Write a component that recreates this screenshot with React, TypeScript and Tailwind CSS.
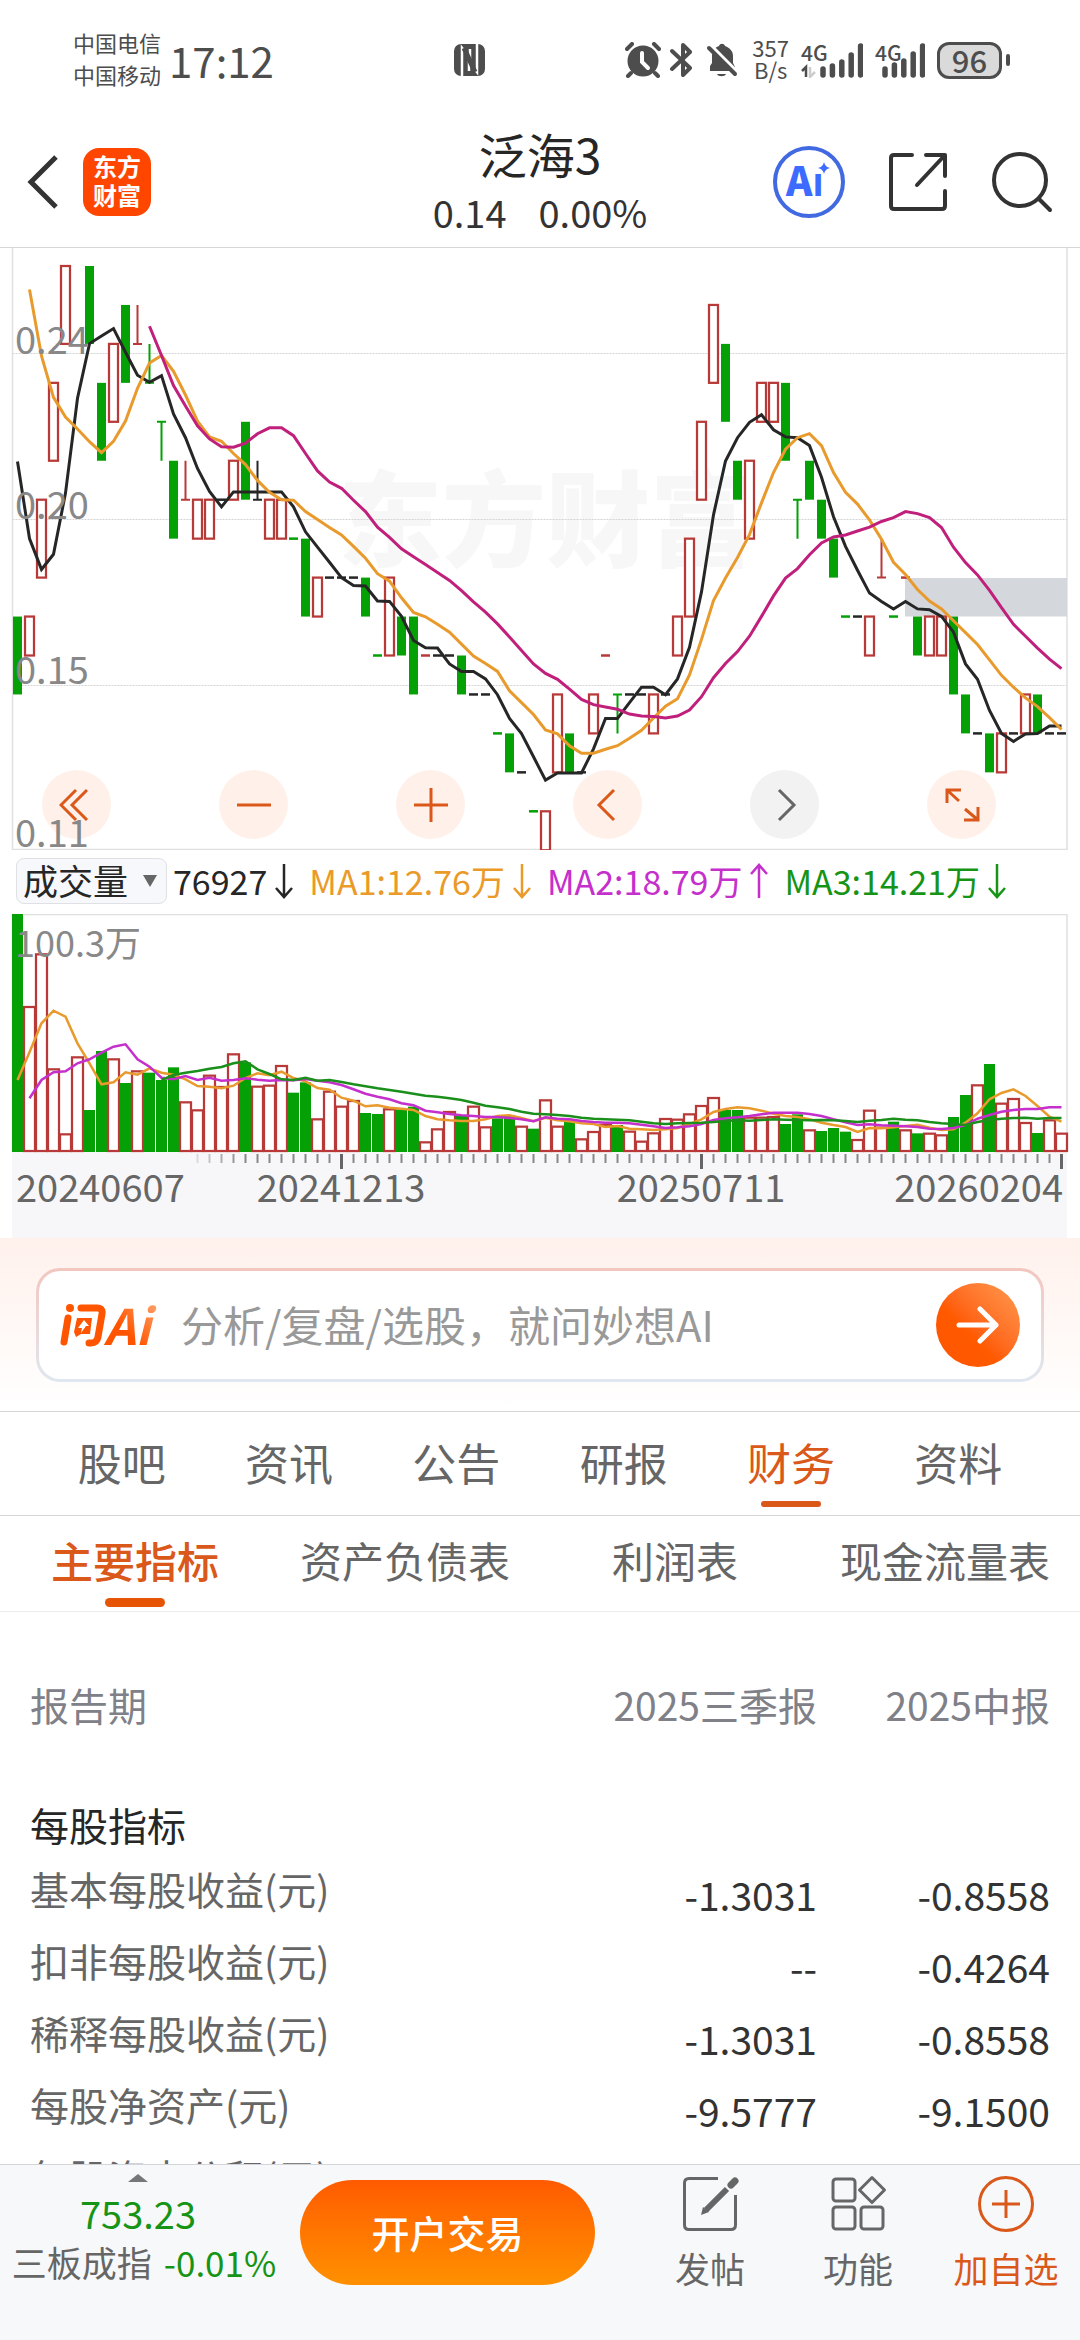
import { useState } from 'react';
import type { ReactNode } from 'react';

type CandleKind = 'up' | 'down' | 'flat';
type Shape = 'body' | 'dash' | 'baseTop' | 'baseBottom';
type Candle = [index: number, kind: CandleKind, shape: Shape, high: number, low: number];

const COLORS = { up: '#b83a38', down: '#05a005', flat: '#262626' };
const FIRST_X = 17.5;
const STEP = 12;

const xAt = (i: number) => FIRST_X + i * STEP;
const levelY = (level: number) => 18 + level * 38.95;
const priceY = (v: number) => v * 0.3954 - 8;
const volumeY = (v: number) => v / 3 - 64;

const candles: Candle[] = [
  [0, 'down', 'body', 9, 11], [1, 'up', 'body', 9, 10], [2, 'up', 'body', 6, 8], [3, 'up', 'body', 3, 5],
  [4, 'up', 'body', 0, 2], [6, 'down', 'body', 0, 2], [7, 'down', 'body', 3, 5], [8, 'up', 'body', 2, 4],
  [9, 'down', 'body', 1, 3], [10, 'up', 'baseBottom', 1, 2], [11, 'down', 'baseBottom', 2, 3],
  [12, 'down', 'baseTop', 4, 5], [13, 'down', 'body', 5, 7], [14, 'up', 'baseBottom', 5, 6],
  [15, 'up', 'body', 6, 7], [16, 'up', 'body', 6, 7], [17, 'flat', 'dash', 6, 6], [18, 'up', 'body', 5, 6],
  [19, 'down', 'body', 4, 6], [20, 'flat', 'baseBottom', 5, 6], [21, 'up', 'body', 6, 7], [22, 'up', 'body', 6, 7],
  [23, 'down', 'dash', 7, 7], [24, 'down', 'body', 7, 9], [25, 'up', 'body', 8, 9], [26, 'flat', 'dash', 8, 8],
  [27, 'flat', 'dash', 8, 8], [28, 'flat', 'dash', 8, 8], [29, 'down', 'body', 8, 9], [30, 'down', 'dash', 10, 10],
  [31, 'up', 'body', 8, 10], [32, 'down', 'body', 9, 10], [33, 'down', 'body', 9, 11], [34, 'up', 'dash', 10, 10],
  [35, 'flat', 'dash', 10, 10], [36, 'flat', 'dash', 10, 10], [37, 'down', 'body', 10, 11], [38, 'flat', 'dash', 11, 11],
  [39, 'flat', 'dash', 11, 11], [40, 'down', 'dash', 12, 12], [41, 'down', 'body', 12, 13], [42, 'flat', 'dash', 13, 13],
  [43, 'down', 'dash', 14, 14], [44, 'up', 'body', 14, 15], [45, 'up', 'body', 11, 13], [46, 'down', 'body', 12, 13],
  [47, 'flat', 'dash', 13, 13], [48, 'up', 'body', 11, 12], [49, 'up', 'dash', 10, 10], [50, 'down', 'baseTop', 11, 12],
  [51, 'flat', 'dash', 11, 11], [52, 'flat', 'dash', 11, 11], [53, 'up', 'body', 11, 12], [54, 'flat', 'dash', 11, 11],
  [55, 'up', 'body', 9, 10], [56, 'up', 'body', 7, 9], [57, 'up', 'body', 4, 6], [58, 'up', 'body', 1, 3],
  [59, 'down', 'body', 2, 4], [60, 'down', 'body', 5, 6], [61, 'up', 'body', 5, 7], [62, 'up', 'body', 3, 4],
  [63, 'up', 'body', 3, 4], [64, 'down', 'body', 3, 5], [65, 'down', 'baseTop', 6, 7], [66, 'down', 'body', 5, 6],
  [67, 'down', 'body', 6, 7], [68, 'down', 'body', 7, 8], [69, 'down', 'dash', 9, 9], [70, 'flat', 'dash', 9, 9],
  [71, 'up', 'body', 9, 10], [72, 'up', 'baseBottom', 7, 8], [73, 'down', 'dash', 9, 9], [74, 'up', 'dash', 8, 8],
  [75, 'down', 'body', 9, 10], [76, 'up', 'body', 9, 10], [77, 'up', 'body', 9, 10], [78, 'down', 'body', 9, 11],
  [79, 'down', 'body', 11, 12], [80, 'flat', 'dash', 12, 12], [81, 'down', 'body', 12, 13], [82, 'up', 'body', 12, 13],
  [83, 'flat', 'dash', 12, 12], [84, 'up', 'body', 11, 12], [85, 'down', 'body', 11, 12], [86, 'flat', 'dash', 12, 12],
  [87, 'flat', 'dash', 12, 12],
];

const priceLines = [
  {
    color: '#262626',
    start: 0,
    values: [
      560, 755, 833, 795, 640, 400, 262, 243, 224, 284, 342, 360, 343, 440, 500, 578, 636, 675, 637, 637, 637, 637, 637, 675,
      738, 777, 815, 854, 874, 875, 913, 914, 952, 1013, 1031, 1032, 1072, 1091, 1091, 1110, 1150, 1210, 1248, 1307, 1366,
      1348, 1348, 1348, 1287, 1210, 1210, 1170, 1131, 1131, 1150, 1110, 1030, 890, 695, 559, 500, 461, 442, 480, 498, 500,
      520, 600, 700, 775, 835, 893, 914, 933, 914, 933, 935, 952, 992, 1072, 1111, 1190, 1248, 1268, 1249, 1248, 1229, 1229,
    ],
  },
  {
    color: '#e99a2c',
    start: 1,
    values: [
      125, 293, 398, 448, 478, 510, 538, 509, 458, 375, 311, 292, 332, 392, 458, 498, 509, 540, 568, 608, 638, 657, 658, 687,
      707, 727, 746, 775, 805, 844, 863, 905, 942, 953, 972, 992, 1022, 1052, 1071, 1091, 1140, 1170, 1200, 1239, 1249, 1279,
      1298, 1298, 1288, 1279, 1260, 1240, 1209, 1179, 1160, 1100, 1010, 912, 855, 803, 745, 665, 588, 529, 500, 490, 520,
      588, 638, 668, 708, 757, 815, 846, 884, 913, 933, 963, 993, 1023, 1062, 1101, 1131, 1158, 1180, 1208, 1238,
    ],
  },
  {
    color: '#c0207c',
    start: 11,
    values: [
      218, 292, 368, 420, 470, 503, 523, 524, 514, 490, 475, 475, 495, 540, 584, 612, 628, 658, 687, 726, 752, 781, 801, 821,
      841, 861, 887, 915, 941, 971, 1004, 1038, 1072, 1096, 1111, 1136, 1162, 1175, 1181, 1187, 1199, 1204, 1205, 1209, 1204,
      1189, 1155, 1107, 1071, 1041, 1002, 952, 900, 855, 831, 796, 766, 751, 746, 736, 726, 712, 702, 687, 692, 702, 727,
      777, 816, 847, 886, 930, 972, 1002, 1032, 1060, 1084,
    ],
  },
];

const volumeTops = [
  192, 468, 310, 655, 850, 619, 780, 603, 625, 699, 661, 668, 690, 652, 754, 778, 674, 708, 610, 637, 707, 704, 645, 728,
  697, 805, 722, 767, 750, 789, 792, 775, 778, 770, 874, 835, 783, 795, 767, 829, 805, 795, 827, 836, 748, 827, 815, 865,
  843, 822, 825, 842, 872, 847, 804, 806, 790, 765, 741, 780, 780, 800, 800, 798, 822, 793, 838, 843, 834, 845, 867, 779,
  830, 815, 838, 850, 848, 853, 801, 735, 703, 642, 758, 744, 816, 849, 808, 848,
];

const fallingVolumes = [
  0, 6, 7, 9, 11, 12, 13, 19, 23, 24, 29, 30, 32, 33, 37, 40, 41, 43, 46, 50, 59, 60, 64, 65, 67, 68, 69, 73, 75, 78, 79, 81, 85,
];

const volumeLines = [
  {
    color: '#e99a2c',
    start: 0,
    values: [
      690, 607, 520, 482, 500, 580, 640, 703, 697, 667, 674, 655, 668, 674, 688, 708, 710, 715, 707, 684, 670, 676, 665, 684,
      694, 714, 719, 743, 752, 769, 766, 773, 776, 780, 798, 808, 811, 813, 813, 808, 798, 796, 804, 814, 803, 811, 814, 820,
      822, 831, 828, 836, 838, 840, 838, 834, 822, 808, 786, 777, 772, 775, 782, 791, 798, 801, 808, 818, 825, 831, 846, 834,
      835, 832, 828, 824, 833, 840, 838, 818, 790, 748, 729, 718, 738, 768, 800, 815,
    ],
  },
  {
    color: '#c52fcb',
    start: 1,
    values: [
      745, 690, 667, 664, 640, 628, 608, 590, 583, 628, 650, 683, 688, 678, 690, 683, 692, 690, 685, 689, 692, 690, 691, 687,
      692, 697, 705, 718, 731, 740, 748, 760, 766, 782, 787, 792, 796, 798, 801, 801, 804, 808, 814, 802, 806, 808, 813, 816,
      818, 818, 820, 824, 829, 834, 832, 829, 822, 810, 805, 802, 798, 793, 788, 788, 788, 792, 798, 808, 817, 825, 823, 826,
      827, 829, 831, 836, 837, 834, 825, 806, 795, 785, 780, 777, 777, 772, 772,
    ],
  },
  {
    color: '#1b8f1b',
    start: 12,
    values: [
      690, 675, 668, 663, 656, 651, 640, 634, 658, 672, 688, 690, 683, 692, 690, 696, 703, 709, 715, 720, 725, 731, 737, 740,
      745, 750, 758, 767, 772, 777, 785, 791, 793, 795, 798, 803, 806, 808, 809, 811, 815, 820, 822, 820, 819, 818, 816, 813,
      811, 812, 810, 808, 809, 810, 811, 810, 811, 813, 816, 812, 810, 806, 809, 811, 816, 820, 822, 825, 816, 810, 806, 804,
      803, 806, 804, 804,
    ],
  },
];

const axisPrices = [
  { label: '0.24', y: 106 },
  { label: '0.20', y: 271 },
  { label: '0.15', y: 436 },
  { label: '0.11', y: 599 },
];

const tabs = ['股吧', '资讯', '公告', '研报', '财务', '资料'];
const reportTabs = ['主要指标', '资产负债表', '利润表', '现金流量表'];

const metrics = [
  { name: '基本每股收益(元)', q3: '-1.3031', half: '-0.8558' },
  { name: '扣非每股收益(元)', q3: '--', half: '-0.4264' },
  { name: '稀释每股收益(元)', q3: '-1.3031', half: '-0.8558' },
  { name: '每股净资产(元)', q3: '-9.5777', half: '-9.1500' },
  { name: '每股资本公积(元)', q3: '', half: '' },
];

function toPoints(values: number[], start: number, toY: (v: number) => number) {
  return values.map((v, i) => `${xAt(start + i)},${toY(v).toFixed(1)}`).join(' ');
}

function SignalBars({ tops }: { tops: number[] }) {
  return (
    <>
      {tops.map((top, i) => (
        <path key={top} d={`M${3 + i * 9.4} ${top + 3}V32`} stroke="#4d4d4d" strokeWidth="5.5" strokeLinecap="round" />
      ))}
    </>
  );
}

function StatusBar() {
  return (
    <div className="flex h-[120px] shrink-0 items-center text-[#4d4d4d]">
      <div className="flex w-[42%] items-center gap-2 pl-[73px]">
        <div className="pb-1 text-[22px] leading-8">
          <div>中国电信</div>
          <div>中国移动</div>
        </div>
        <span className="text-[42px] leading-[60px]">17:12</span>
      </div>
      <svg width="32" height="34" viewBox="0 0 32 34">
        <rect x="0" y="1" width="31" height="32" rx="7" fill="#4d4d4d" />
        <path d="M8 34V5L15 14V28" fill="none" stroke="#fff" strokeWidth="2.5" />
        <path d="M23 0V29L16 20V6" fill="none" stroke="#fff" strokeWidth="2.5" />
        <path d="M10 5L21 29" stroke="#4d4d4d" strokeWidth="5" />
      </svg>
      <div className="ml-auto flex items-center pr-[70px]">
        <svg width="37" height="36" viewBox="0 0 37 36" className="mr-2">
          <circle cx="18" cy="19" r="15.5" fill="#4d4d4d" />
          <path d="M2 7L7 2M34 7L29 2M6 31L3 34M30 31L33 34" stroke="#4d4d4d" strokeWidth="4" strokeLinecap="round" />
          <path d="M17 11V20L23 26" fill="none" stroke="#fff" strokeWidth="4" strokeLinecap="round" />
        </svg>
        <svg width="24" height="36" viewBox="0 0 24 36" className="mr-3">
          <path d="M2 9L20 26L13 33V3L20 10L2 27" fill="none" stroke="#4d4d4d" strokeWidth="4" strokeLinecap="round" strokeLinejoin="round" />
        </svg>
        <svg width="32" height="36" viewBox="0 0 32 36" className="mr-3.5">
          <path d="M4 29V24L6 21V13C7 7 10 5 13 4C14 1 18 1 19 4C24 6 27 9 27 14V21L29 25V29Z" fill="#4d4d4d" />
          <path d="M11 32H20C19 35 12 35 11 32Z" fill="#4d4d4d" />
          <path d="M4 3L31 30" stroke="#fff" strokeWidth="4" />
          <path d="M3 6L29 32" stroke="#4d4d4d" strokeWidth="4" strokeLinecap="round" />
        </svg>
        <div className="mr-3 pb-1 text-center text-[22px] leading-[22px]">
          <div>357</div>
          <div>B/s</div>
        </div>
        <div className="relative mr-3 h-[35px] w-[62px]">
          <span className="absolute top-0 left-0 text-[21px] leading-[18px] font-medium">4G</span>
          <svg className="absolute right-0 bottom-0" width="62" height="35" viewBox="-19 0 62 35">
            <path d="M-18 28L-14 24V34" fill="none" stroke="#4d4d4d" strokeWidth="2.5" />
            <path d="M-10 24V34L-5 29" fill="none" stroke="#ccc" strokeWidth="2.5" />
            <SignalBars tops={[23, 20, 16, 9, 0]} />
          </svg>
        </div>
        <div className="relative mr-3 h-[35px] w-[50px]">
          <span className="absolute top-0 left-0 text-[21px] leading-[18px] font-medium">4G</span>
          <svg className="absolute right-0 bottom-0" width="50" height="35" viewBox="-7 0 50 35">
            <SignalBars tops={[23, 19, 15, 8, 0]} />
          </svg>
        </div>
        <div className="flex h-[37px] w-[65px] items-center justify-center rounded-xl border-[3px] border-[#4d4d4d] bg-[#dadada] text-[31px] leading-8 font-medium">
          96
        </div>
        <div className="ml-1 h-3 w-1 rounded-full bg-[#4d4d4d]" />
      </div>
    </div>
  );
}

function Header() {
  return (
    <header className="grid h-32 shrink-0 grid-cols-[1fr_auto_1fr] items-center border-b border-[#d6d6d6] px-[27px] pb-1">
      <div className="flex items-center gap-6">
        <button aria-label="返回">
          <svg width="32" height="56" viewBox="0 0 32 56" fill="none" stroke="#333" strokeWidth="5">
            <path d="M29 3L4 28L29 53" />
          </svg>
        </button>
        <a href="#home" className="flex size-[68px] flex-col items-center justify-center rounded-2xl bg-[#ff4600] pb-1 text-[24px] leading-[29px] font-bold text-white">
          <span>东方</span>
          <span>财富</span>
        </a>
      </div>
      <div className="text-center">
        <h1 className="text-[48px] leading-[60px] text-[#262626]">泛海3</h1>
        <p className="flex justify-center gap-8 text-[38px] leading-[58px]">
          <span>0.14</span>
          <span>0.00%</span>
        </p>
      </div>
      <div className="flex items-center justify-end gap-[43px]">
        <button aria-label="AI">
          <svg width="72" height="74" viewBox="0 0 72 74">
            <circle cx="36" cy="37" r="34" fill="none" stroke="#4169e1" strokeWidth="4" />
            <text x="13" y="51" fontSize="40" fontWeight="900" fill="#3d6bff">
              Aı
            </text>
            <path d="M51 17Q52 22 57 23Q52 24 51 29Q50 24 45 23Q50 22 51 17Z" fill="#3d6bff" />
          </svg>
        </button>
        <button aria-label="分享">
          <svg width="60" height="60" viewBox="0 0 60 60" fill="none" stroke="#333" strokeWidth="4" strokeLinecap="round" strokeLinejoin="round">
            <path d="M24 3H6Q3 3 3 6V54Q3 57 6 57H54Q57 57 57 54V39" />
            <path d="M38 3H57V24M57 3L29 33" />
          </svg>
        </button>
        <button aria-label="搜索">
          <svg width="62" height="62" viewBox="0 0 62 62" fill="none" stroke="#333" strokeWidth="4" strokeLinecap="round">
            <circle cx="29" cy="29" r="26" />
            <path d="M48 48L59 59" />
          </svg>
        </button>
      </div>
    </header>
  );
}

function CandleMark({ candle }: { candle: Candle }) {
  const [index, kind, shape, high, low] = candle;
  const x = xAt(index);
  const top = levelY(high);
  const bottom = levelY(low);
  const color = COLORS[kind];

  if (shape === 'dash') return <path d={`M${x - 4.5} ${top}h9`} stroke={color} strokeWidth="2.5" />;
  if (shape === 'baseTop') return <path d={`M${x - 4.5} ${top}h9M${x} ${top}V${bottom}`} stroke={color} strokeWidth="2" />;
  if (shape === 'baseBottom') return <path d={`M${x - 4.5} ${bottom}h9M${x} ${top}V${bottom}`} stroke={color} strokeWidth="2" />;
  if (kind === 'down') return <rect x={x - 4.5} y={top} width="9" height={bottom - top} fill={color} />;
  return <rect x={x - 4.5} y={top} width="9" height={bottom - top} fill="#fff" stroke={color} strokeWidth="2.25" />;
}

function ChartButton({ label, muted, children }: { label: string; muted?: boolean; children: ReactNode }) {
  return (
    <button
      aria-label={label}
      className={`flex size-[69px] items-center justify-center rounded-full ${muted ? 'bg-[#f2f2f2] text-[#666]' : 'bg-[#fff1ea] text-[#d9581a]'}`}
    >
      <svg width="36" height="36" viewBox="0 0 36 36" fill="none" stroke="currentColor" strokeWidth="3">
        {children}
      </svg>
    </button>
  );
}

function PriceChart() {
  return (
    <section className="relative">
      <svg viewBox="0 0 1080 602" className="block h-auto w-full">
        <text x="338" y="311" fontSize="104" fontWeight="900" fill="#f7f7f7">
          东方财富
        </text>
        <path d="M12.5 105.5H1067M12.5 271.5H1067M12.5 437.5H1067" stroke="#d4d4d4" strokeDasharray="2 1" />
        <path d="M12.5 0V601.500H1067V0" fill="none" stroke="#e0e0e0" strokeWidth="1.5" />
        <rect x="905" y="330" width="162" height="38.5" fill="#d4d7dc" />
        {candles.map((candle) => (
          <CandleMark key={candle[0]} candle={candle} />
        ))}
        {priceLines.map((line) => (
          <polyline key={line.color} points={toPoints(line.values, line.start, priceY)} fill="none" stroke={line.color} strokeWidth="3" />
        ))}
      </svg>
      <div className="absolute right-[84px] bottom-[11px] left-[42px] flex justify-between">
        <ChartButton label="最早">
          <path d="M17 3L2 18L17 33M28 3L13 18L28 33" />
        </ChartButton>
        <ChartButton label="缩小">
          <path d="M1 18H35" />
        </ChartButton>
        <ChartButton label="放大">
          <path d="M1 18H35M18 1V35" />
        </ChartButton>
        <ChartButton label="向左">
          <path d="M24 3L9 18L24 33" />
        </ChartButton>
        <ChartButton label="向右" muted>
          <path d="M12 3L27 18L12 33" />
        </ChartButton>
        <ChartButton label="全屏">
          <path d="M3 16V3H17M3 3L15 14M34 20V33H20M34 33L21 22" />
        </ChartButton>
      </div>
      <svg viewBox="0 0 1080 602" className="pointer-events-none absolute inset-0 h-auto w-full">
        {axisPrices.map((price) => (
          <text key={price.label} x="15" y={price.y} fontSize="38" fill="#888">
            {price.label}
          </text>
        ))}
      </svg>
    </section>
  );
}

function Average({ text, up, color }: { text: string; up?: boolean; color: string }) {
  return (
    <span className={`flex items-center gap-2 ${color}`}>
      {text}
      <svg width="18" height="36" viewBox="0 0 18 36" fill="none" stroke="currentColor" strokeWidth="2.5">
        {up ? <path d="M9 35V2M1 11L9 2L17 11" /> : <path d="M9 1V34M1 25L9 34L17 25" />}
      </svg>
    </span>
  );
}

function IndicatorRow() {
  return (
    <div className="flex h-16 items-center pb-0.5 pl-4 text-[34px] leading-10 whitespace-nowrap">
      <label className="relative mr-1.5 block">
        <select aria-label="指标" className="h-[46px] w-[151px] appearance-none rounded-lg border border-[#dfe1e5] bg-[#f7f8fb] pb-0.5 pl-1.5 text-[35px] leading-10 text-[#262626]">
          <option>成交量</option>
        </select>
        <svg width="14" height="12" viewBox="0 0 14 12" className="pointer-events-none absolute top-[17px] right-[10px]">
          <path d="M0 0H14L7 12Z" fill="#666" />
        </svg>
      </label>
      <div className="flex gap-4">
        <Average text="76927" color="text-[#262626]" />
        <Average text="MA1:12.76万" color="text-[#ea9a28]" />
        <Average text="MA2:18.79万" color="text-[#c52fcb]" up />
        <Average text="MA3:14.21万" color="text-[#169416]" />
      </div>
    </div>
  );
}

function VolumeChart() {
  return (
    <svg viewBox="0 0 1080 324" className="block h-auto w-full">
      <rect x="12" y="238" width="1055" height="86" fill="#f7f7fa" />
      <path d="M12.5 238V0.5H1067V238" fill="none" stroke="#e0e0e0" strokeWidth="1.5" />
      {volumeTops.map((top, i) => {
        const y = volumeY(top);
        if (fallingVolumes.includes(i)) {
          return <rect key={i} x={xAt(i) - 5.5} y={y} width="11" height={238 - y} fill={COLORS.down} />;
        }
        return <rect key={i} x={xAt(i) - 5.5} y={y + 1} width="11" height={236 - y} fill="#fff" stroke={COLORS.up} strokeWidth="2.25" />;
      })}
      <text x="15" y="43" fontSize="36" fill="#888">
        100.3万
      </text>
      {volumeLines.map((line) => (
        <polyline key={line.color} points={toPoints(line.values, line.start, volumeY)} fill="none" stroke={line.color} strokeWidth="2.5" />
      ))}
      {volumeTops.map((_, i) => {
        if (i < 15) return null;
        const major = i === 27 || i === 57 || i === 87;
        return (
          <path
            key={i}
            d={`M${xAt(i)} 240V${major ? 255 : 249}`}
            stroke={major ? '#666' : '#888'}
            strokeWidth={major ? 3 : 2}
            opacity={i < 19 ? 0.25 + (i - 15) * 0.2 : 1}
          />
        );
      })}
      <g fontSize="38" fill="#666">
        <text x="16" y="288">20240607</text>
        <text x="341" y="288" textAnchor="middle">20241213</text>
        <text x="701" y="288" textAnchor="middle">20250711</text>
        <text x="1063" y="288" textAnchor="end">20260204</text>
      </g>
    </svg>
  );
}

function AskAi() {
  return (
    <section className="h-[174px] border-b border-[#d6d6d6] bg-linear-to-b from-[#fff1ec] to-white px-9 pt-[30px]">
      <div className="rounded-3xl bg-linear-to-b from-[#f3c6bf] to-[#dfe7f1] p-[3px]">
        <form className="flex h-[108px] items-center rounded-[21px] bg-white pr-[21px] pl-5">
          <svg width="100" height="46" viewBox="0 0 100 46" className="mr-[22px] shrink-0">
            <defs>
              <linearGradient id="askAi" gradientUnits="userSpaceOnUse" x1="60" y1="46" x2="100" y2="10">
                <stop offset="0.3" stopColor="#ff5500" />
                <stop offset="1" stopColor="#ff9a60" />
              </linearGradient>
            </defs>
            <g fill="none" stroke="#ff5500" strokeWidth="7" strokeLinejoin="round" strokeLinecap="round">
              <path d="M9 16L5 40" />
              <path d="M22 6H38Q44 6 43 12L39 35Q38 41 32 41H30" />
            </g>
            <circle cx="11" cy="6" r="4" fill="#ff5500" />
            <path d="M18 16H33L31 32H22L17 35L15 30Z" fill="#ff5500" />
            <path d="M25 18L30 24H27L22 31L23 26H19Z" fill="#fff" />
            <text x="45" y="43" fontSize="49" fontWeight="700" fontStyle="italic" fill="url(#askAi)">
              Ai
            </text>
          </svg>
          <input
            aria-label="提问"
            placeholder="分析/复盘/选股，就问妙想AI"
            className="min-w-0 flex-1 pb-0.5 text-[42px] leading-[60px] outline-none placeholder:text-[#999]"
          />
          <button type="button" aria-label="发送" className="flex size-[84px] items-center justify-center rounded-full bg-linear-to-bl from-[#ff9a4d] via-[#ff5a00] via-60% to-[#ff5500]">
            <svg width="44" height="38" viewBox="0 0 44 38" fill="none" stroke="#fff" strokeWidth="5" strokeLinecap="round" strokeLinejoin="round">
              <path d="M3 19H40M24 3L40 19L24 35" />
            </svg>
          </button>
        </form>
      </div>
    </section>
  );
}

function Tabs() {
  const [tab, setTab] = useState('财务');
  const [report, setReport] = useState('主要指标');

  return (
    <>
      <nav className="flex h-[104px] border-b border-[#d6d6d6] px-[38px]">
        {tabs.map((name) => (
          <button
            key={name}
            onClick={() => setTab(name)}
            className={`relative flex-1 pb-1 text-[44px] leading-[60px] ${name === tab ? 'text-[#d9581a]' : 'text-[#666]'}`}
          >
            {name}
            {name === tab && <span className="absolute bottom-2 left-1/2 h-1.5 w-[60px] -translate-x-1/2 rounded-full bg-[#d9581a]" />}
          </button>
        ))}
      </nav>
      <nav className="flex h-24 border-b border-[#ececec]">
        {reportTabs.map((name) => (
          <button
            key={name}
            onClick={() => setReport(name)}
            className={`relative flex-1 pb-2 text-[42px] leading-[60px] ${name === report ? 'font-medium text-[#d9581a]' : 'text-[#666]'}`}
          >
            {name}
            {name === report && <span className="absolute bottom-1 left-1/2 h-[9px] w-[60px] -translate-x-1/2 rounded-full bg-[#e65505]" />}
          </button>
        ))}
      </nav>
    </>
  );
}

function FinanceTable() {
  return (
    <table className="w-full text-[39px] leading-[52px]">
      <thead>
        <tr className="h-[184px] text-[#808088]">
          <th className="pl-[30px] text-left font-normal">报告期</th>
          <th className="text-right font-normal">2025三季报</th>
          <th className="w-[263px] pr-[30px] text-right font-normal">2025中报</th>
        </tr>
      </thead>
      <tbody>
        <tr className="h-14">
          <th colSpan={3} className="pl-[30px] text-left font-normal text-[#262626]">
            每股指标
          </th>
        </tr>
        {metrics.map((row) => (
          <tr key={row.name} className="h-[72px]">
            <th className="pl-[30px] text-left font-normal text-[#666]">{row.name}</th>
            <td className="pt-3 text-right">{row.q3}</td>
            <td className="pt-3 pr-[30px] text-right">{row.half}</td>
          </tr>
        ))}
      </tbody>
    </table>
  );
}

function NavItem({ label, accent, children }: { label: string; accent?: boolean; children: ReactNode }) {
  return (
    <button className={`flex w-[148px] flex-col items-center gap-2.5 text-[35px] leading-[50px] ${accent ? 'text-[#d9581a]' : 'text-[#666]'}`}>
      <svg width="58" height="58" viewBox="0 0 58 58" fill="none" stroke="currentColor" strokeWidth="3">
        {children}
      </svg>
      {label}
    </button>
  );
}

function BottomBar() {
  return (
    <footer className="flex h-44 shrink-0 items-start border-t border-[#d3d5d8] bg-[#f7f8fa]">
      <a href="#index" className="flex w-[276px] flex-col items-center pt-[9px]">
        <svg width="20" height="8" viewBox="0 0 20 8">
          <path d="M0 8L10 0L20 8Z" fill="#777" />
        </svg>
        <span className="mt-1.5 text-[38px] leading-[50px] text-[#169416]">753.23</span>
        <span className="flex gap-3 pl-3 text-[35px] leading-[48px] whitespace-nowrap text-[#666]">
          三板成指
          <span className="text-[#169416]">-0.01%</span>
        </span>
      </a>
      <button className="mt-[15px] mr-[41px] ml-6 h-[105px] flex-1 rounded-full bg-linear-to-b from-[#ff5a00] to-[#ff9000] pb-0.5 text-[38px] leading-[50px] font-medium text-white">
        开户交易
      </button>
      <nav className="flex pt-[10px]">
        <NavItem label="发帖">
          <path d="M37 3.5H8Q3.5 3.5 3.5 8V50Q3.5 54.5 8 54.5H50Q54.5 54.5 54.5 50V20" />
          <path d="M46 14L25 35" strokeWidth="6" />
          <path d="M50 10L54 6" strokeWidth="7" strokeLinecap="round" />
          <path d="M20 40L22 32L28 37Z" fill="currentColor" stroke="none" />
        </NavItem>
        <NavItem label="功能">
          <rect x="4" y="4" width="22" height="22" rx="3" />
          <rect x="4" y="32" width="22" height="22" rx="3" />
          <rect x="32" y="32" width="22" height="22" rx="3" />
          <path d="M43 2.5L55.5 15L43 27.5L30.5 15Z" strokeLinejoin="round" />
        </NavItem>
        <NavItem label="加自选" accent>
          <circle cx="29" cy="29" r="26.5" />
          <path d="M15 29H43M29 15V43" />
        </NavItem>
      </nav>
    </footer>
  );
}

export default function App() {
  return (
    <div className="flex h-screen flex-col overflow-hidden bg-white font-['Noto_Sans_CJK_SC',sans-serif] text-[#333]">
      <StatusBar />
      <Header />
      <main className="min-h-0 flex-1 overflow-hidden">
        <PriceChart />
        <IndicatorRow />
        <VolumeChart />
        <AskAi />
        <Tabs />
        <FinanceTable />
      </main>
      <BottomBar />
    </div>
  );
}
